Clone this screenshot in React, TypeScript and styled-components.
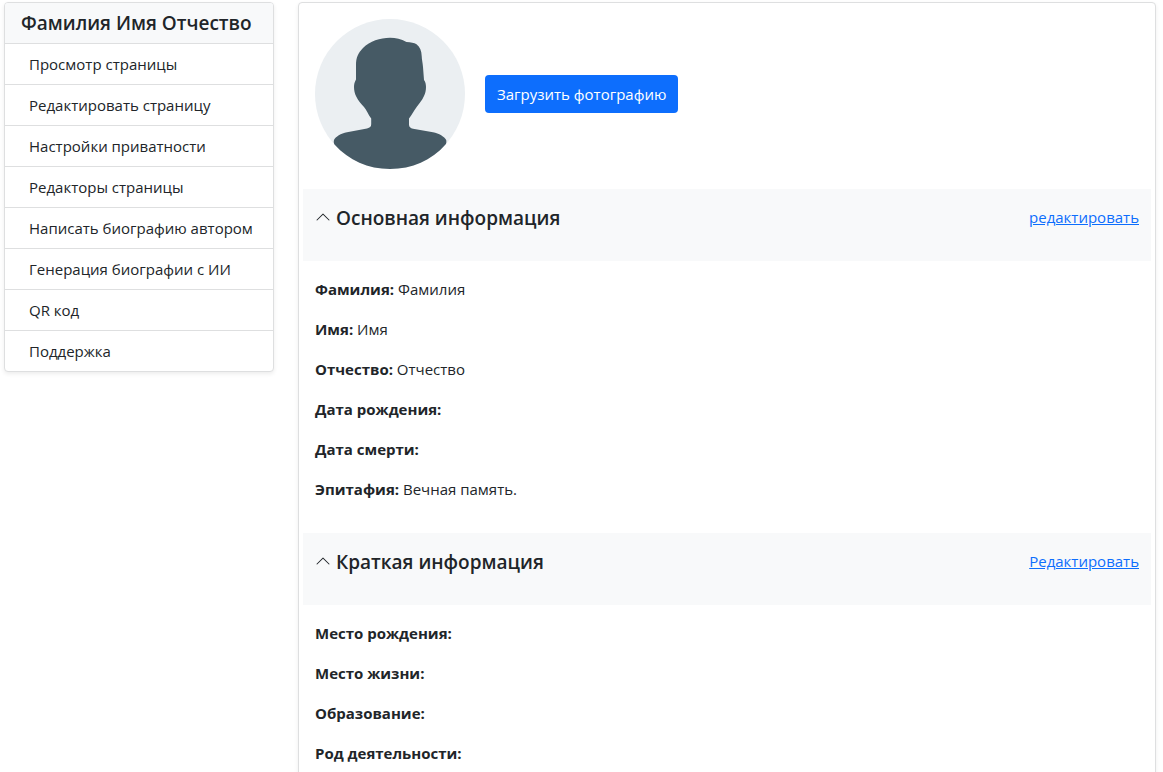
import React, { useState } from "react";
import styled, { createGlobalStyle } from "styled-components";

const GlobalStyle = createGlobalStyle`
  *, *::before, *::after { box-sizing: border-box; }
  body {
    margin: 0;
    background: #fff;
    color: #212529;
    font-family: "Segoe UI", "Open Sans", "Noto Sans", sans-serif;
    font-size: 15px;
    line-height: 24px;
  }
`;

const Page = styled.div`
  display: grid;
  grid-template-columns: 270px minmax(0, 1fr);
  align-items: start;
  gap: 24px;
  padding: 2px 7px 0 4px;
`;

const Card = styled.div`
  background: #fff;
  border: 1px solid #dedfe0;
  border-radius: 4px;
  box-shadow: 0 2px 4px rgba(0, 0, 0, 0.075);
`;

const SideTitle = styled.h1`
  margin: 0;
  padding: 8px 16px;
  background: #f8f9fa;
  border-radius: 3px 3px 0 0;
  font-size: 19px;
  font-weight: 600;
  line-height: 24px;
  white-space: nowrap;
`;

const MenuList = styled.ul`
  margin: 0;
  padding: 0;
  list-style: none;
`;

const MenuItem = styled.li`
  border-top: 1px solid #dedfe0;
`;

const MenuLink = styled.a`
  display: block;
  padding: 8px 16px 8px 24px;
  color: inherit;
  text-decoration: none;
  white-space: nowrap;
`;

const Content = styled(Card)`
  padding: 16px 4px 4px;
`;

const PhotoRow = styled.div`
  display: flex;
  align-items: center;
  gap: 20px;
  padding: 0 12px 20px;
`;

const AvatarImage = styled.svg`
  display: block;
  width: 150px;
  height: 150px;
`;

const UploadButton = styled.button`
  padding: 7px 12px;
  border: 0;
  border-radius: 4px;
  background: #0d6efd;
  color: #fff;
  font: inherit;
  cursor: pointer;
`;

const SectionHeader = styled.div`
  display: flex;
  justify-content: space-between;
  align-items: flex-start;
  padding: 16px 12px 30px;
  background: #f8f9fa;
`;

const SectionTitle = styled.h2`
  margin: 0;
  font-size: 19px;
  font-weight: 600;
  line-height: 26px;
`;

const Toggle = styled.button`
  display: flex;
  align-items: center;
  gap: 5px;
  padding: 0;
  border: 0;
  background: none;
  color: inherit;
  font: inherit;
  cursor: pointer;
`;

const Chevron = styled.svg<{ $open: boolean }>`
  width: 16px;
  height: 16px;
  margin-bottom: 2px;
  fill: currentColor;
  transform: ${({ $open }) => ($open ? "none" : "rotate(180deg)")};
`;

const EditLink = styled.a`
  color: #0d6efd;
  text-decoration: underline;
`;

const Fields = styled.div`
  padding: 16px 12px;
`;

const Field = styled.p`
  margin: 0 0 16px;
`;

const Label = styled.strong`
  font-weight: 700;
`;

const menu = [
  "Просмотр страницы",
  "Редактировать страницу",
  "Настройки приватности",
  "Редакторы страницы",
  "Написать биографию автором",
  "Генерация биографии с ИИ",
  "QR код",
  "Поддержка",
];

type FieldData = { label: string; value?: string };

const basicFields: FieldData[] = [
  { label: "Фамилия:", value: "Фамилия" },
  { label: "Имя:", value: "Имя" },
  { label: "Отчество:", value: "Отчество" },
  { label: "Дата рождения:" },
  { label: "Дата смерти:" },
  { label: "Эпитафия:", value: "Вечная память." },
];

const briefFields: FieldData[] = [
  { label: "Место рождения:" },
  { label: "Место жизни:" },
  { label: "Образование:" },
  { label: "Род деятельности:" },
];

function Avatar() {
  return (
    <AvatarImage viewBox="0 0 150 150" aria-hidden="true">
      <circle cx="75" cy="75" r="75" fill="#ebeff2" />
      <path
        fill="#465a65"
        d="M75 18.7C81 18.7 86 20 91.5 23C96 23.4 99 23.8 101.5 25.2C105 28 106.6 32 106.7 37C106.8 41 107.8 44 108 48L109 61C110.5 63 111 65.500 111 68C111 75 108 80 102 87.500C99.500 90.500 97 96 94 99.500V105.500C94 108 95.500 109.200 98 109.700L118 113.200C124 114.500 129.500 117.500 131.200 121C131.600 123 131.300 124.500 130.500 125.500C116.500 141.500 97 150 75 150C53 150 34 141.500 19.500 125.500C18.700 124 18.600 122.500 19 121C20.500 117.500 26 114.500 32 113.200L52 109.500C55 108.800 56.200 107.500 56.200 105V99.500C53.500 96 51.500 91 49 88C42 80.500 39 75 39 68C39 65.500 39.500 63 41 60.500V46C41 39 43 34 48 29C55 22 65 18.700 75 18.700Z"
      />
    </AvatarImage>
  );
}

type SectionProps = { title: string; action: string; fields: FieldData[] };

function Section({ title, action, fields }: SectionProps) {
  const [open, setOpen] = useState(true);
  return (
    <section>
      <SectionHeader>
        <SectionTitle>
          <Toggle type="button" aria-expanded={open} onClick={() => setOpen(!open)}>
            <Chevron $open={open} viewBox="0 0 16 16" aria-hidden="true">
              <path d="M7.646 4.646a.5.5 0 0 1 .708 0l6 6a.5.5 0 0 1-.708.708L8 5.707l-5.646 5.647a.5.5 0 0 1-.708-.708z" />
            </Chevron>
            {title}
          </Toggle>
        </SectionTitle>
        <EditLink href="#">{action}</EditLink>
      </SectionHeader>
      {open && (
        <Fields>
          {fields.map(({ label, value }) => (
            <Field key={label}>
              <Label>{label}</Label> {value}
            </Field>
          ))}
        </Fields>
      )}
    </section>
  );
}

export default function App() {
  return (
    <>
      <GlobalStyle />
      <Page>
        <Card as="nav">
          <SideTitle>Фамилия Имя Отчество</SideTitle>
          <MenuList>
            {menu.map((item) => (
              <MenuItem key={item}>
                <MenuLink href="#">{item}</MenuLink>
              </MenuItem>
            ))}
          </MenuList>
        </Card>
        <Content as="main">
          <PhotoRow>
            <Avatar />
            <UploadButton type="button">Загрузить фотографию</UploadButton>
          </PhotoRow>
          <Section title="Основная информация" action="редактировать" fields={basicFields} />
          <Section title="Краткая информация" action="Редактировать" fields={briefFields} />
        </Content>
      </Page>
    </>
  );
}
